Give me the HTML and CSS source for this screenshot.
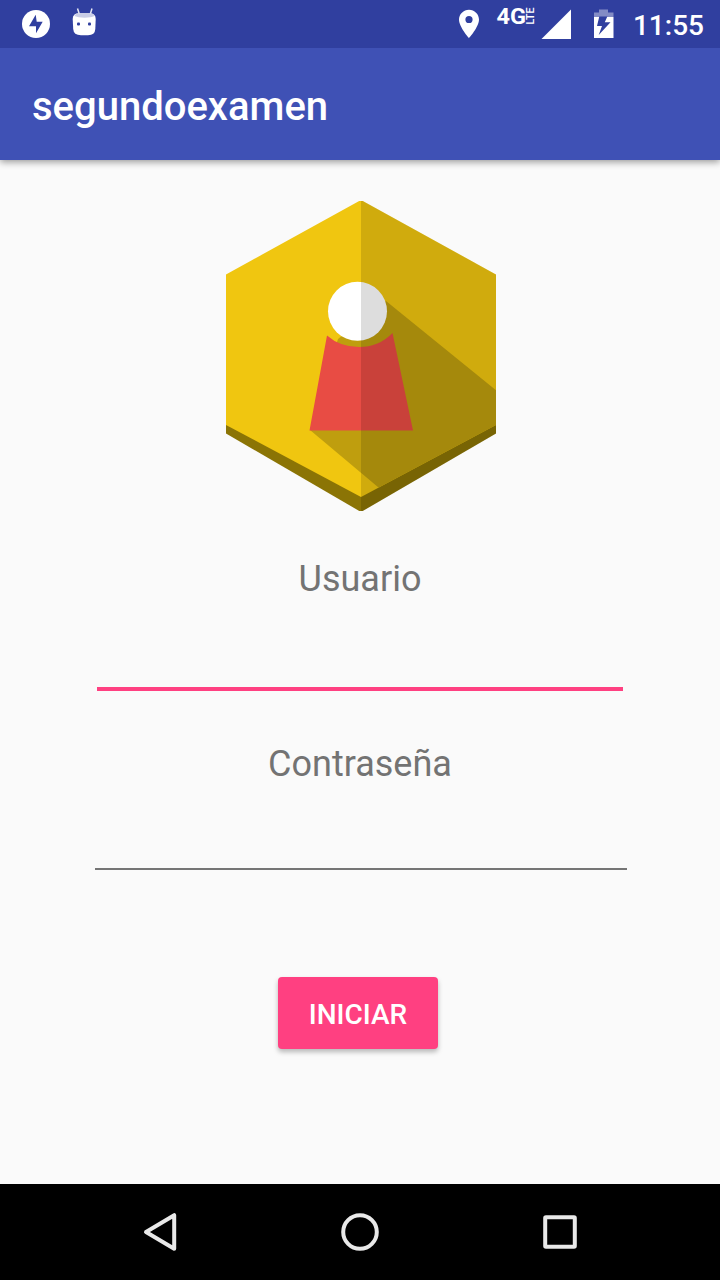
FILE: index.html
```html
<!DOCTYPE html>
<html lang="es">
<head>
<meta charset="utf-8">
<title>segundoexamen</title>
<link rel="stylesheet" href="styles.css">
</head>
<body>
<div class="screen">
  <div class="status-bar">
    <svg class="status-icons" viewBox="0 0 120 48" width="120" height="48">
      <circle cx="36" cy="24" r="14" fill="#fff"/>
      <path d="M35.700 14.700 29 26.300H36V33.300L42.700 21.700H36.700z" fill="#303f9f"/>
      <path d="M77.500 8.500 79.300 14M92 8.500 90.300 14" stroke="#e5e7f3" stroke-width="1.500" fill="none"/>
      <path d="M72.700 19Q72.700 13.200 79 13.200H89.500Q95.700 13.200 95.700 19L95.300 29Q95 35.200 88 35.200H81Q73.600 35.200 73.200 29Z" fill="#fff"/>
      <path d="M74.300 16Q75.500 13.200 80 13.200H89Q93.500 13.200 94.500 16Q91 17.700 84.500 17.700T74.300 16Z" fill="#c9cde6"/>
      <rect x="77" y="22.500" width="3" height="3" rx="1" fill="#303f9f"/>
      <rect x="88" y="22.500" width="3" height="3" rx="1" fill="#303f9f"/>
    </svg>
    <svg class="status-icons" viewBox="450 0 170 48" width="170" height="48">
      <path d="M469 9.700c-5.500 0-10 4.400-10 9.900 0 7.400 10 18.600 10 18.600s10-11.200 10-18.600c0-5.500-4.500-9.900-10-9.900zm0 13.400a3.600 3.600 0 1 1 0-7.200 3.600 3.600 0 0 1 0 7.200z" fill="#fff"/>
      <text class="network" x="496.500" y="24" textLength="29.500" lengthAdjust="spacingAndGlyphs">4G</text>
      <text class="network-sub" transform="translate(534 24.500) rotate(-90)" textLength="17" lengthAdjust="spacingAndGlyphs">LTE</text>
      <path d="M541.500 39H571V9.500Z" fill="#fff"/>
      <path d="M594 17V12.500h5V9.500h9v3h5.500V17z" fill="#838cc5"/>
      <path d="M594 17h19.500v21H594z" fill="#fff"/>
      <path d="M599.300 16.500H607.300L604.800 22.300H610.500L598.700 35 602 26H597z" fill="#303f9f"/>
    </svg>
    <span class="clock">11:55</span>
  </div>
  <header class="app-bar"><h1 class="app-title">segundoexamen</h1></header>
  <main class="login">
    <svg class="logo" viewBox="225 201 272 310" width="272" height="310">
      <defs>
        <clipPath id="face"><path d="M361 200 496 274.500V425L361 497 226 425V274.500Z"/></clipPath>
        <clipPath id="badge"><path d="M361 200 496 274.500V433.500L361 512 226 433.500V274.500Z"/></clipPath>
      </defs>
      <g class="logo-art">
        <path d="M226 424V433.500L361 512 496 433.500V424Z" fill="#8b7405"/>
        <g clip-path="url(#face)">
          <path d="M225 200H497V498H225Z" fill="#f0c610"/>
          <path d="M338 339 386 301 497 391V498H391L310 430Z" fill="#bf9e0e"/>
        </g>
        <path d="M327 335.500Q340 347 359 347 379 347 392.500 333L413 430.500H309.500Z" fill="#e84c44"/>
        <circle cx="357.500" cy="311.300" r="29.500" fill="#fff"/>
        <path d="M361 200H497V512H361Z" fill="#000" fill-opacity=".135" clip-path="url(#badge)"/>
      </g>
    </svg>
    <label class="caption caption-user" for="user">Usuario</label>
    <input class="field field-active" id="user" type="text">
    <label class="caption caption-pass" for="pass">Contraseña</label>
    <input class="field field-idle" id="pass" type="password">
    <button class="submit" type="button">INICIAR</button>
  </main>
  <nav class="nav-bar">
    <svg class="nav-icon" viewBox="0 0 40 40" width="40" height="40"><path d="M34.200 3.200V36.800L6 20Z"/></svg>
    <svg class="nav-icon" viewBox="0 0 40 40" width="40" height="40"><circle cx="20" cy="20" r="16.800"/></svg>
    <svg class="nav-icon" viewBox="0 0 40 40" width="40" height="40"><rect x="5.200" y="5.200" width="29.600" height="29.600" rx=".8"/></svg>
  </nav>
</div>
</body>
</html>
```
FILE: styles.css
```css
* { box-sizing: border-box; }
body { margin: 0; font-family: Roboto, sans-serif; }
.screen { width: 720px; height: 1280px; display: flex; flex-direction: column; background: #fafafa; overflow: hidden; }
.status-bar { height: 48px; flex: none; display: flex; justify-content: space-between; background: #303f9f; color: #fff; padding-right: 16px; }
.status-icons { flex: none; }
.status-icons + .status-icons { margin-left: auto; }
.network { font: 700 22.500px Roboto, sans-serif; fill: #fff; }
.network-sub { font: 500 10.500px Roboto, sans-serif; fill: #fff; }
.clock { width: 84px; text-align: right; font-size: 28px; font-weight: 500; line-height: 51px; }
.app-bar { height: 112px; flex: none; display: flex; align-items: center; padding: 6px 32px 0; background: #3f51b5; box-shadow: 0 2px 7px rgba(0, 0, 0, .4); clip-path: inset(0 0 -14px 0); }
.app-title { margin: 0; color: #fff; font-size: 40px; font-weight: 500; line-height: 48px; }
.login { flex: 1; display: flex; flex-direction: column; align-items: center; padding-top: 41px; }
.logo { display: block; flex: none; margin-left: 2px; }
.logo-art { filter: blur(.7px); }
.caption { color: #737373; font-size: 36px; line-height: 48px; }
.caption-user { margin-top: 44px; }
.caption-pass { margin-top: 49px; }
.field { display: block; border: 0; border-radius: 0; padding: 0; background: transparent; outline: none; font: 36px Roboto, sans-serif; }
.field-active { width: 526px; height: 88px; border-bottom: 4px solid #ff4081; }
.field-idle { width: 532px; height: 82px; margin-left: 2px; border-bottom: 2px solid #757575; }
.submit { width: 160px; height: 72px; margin: 107px 4px 0 0; padding: 3px 0 0; border: 0; border-radius: 4px; background: #ff4081; color: #fff; font: 500 28px Roboto, sans-serif; box-shadow: 0 3px 5px rgba(0, 0, 0, .27); }
.nav-bar { height: 96px; flex: none; display: flex; align-items: center; justify-content: center; gap: 160px; background: #000; }
.nav-icon { fill: none; stroke: #e9e9e9; stroke-width: 4; stroke-linejoin: round; }
```
